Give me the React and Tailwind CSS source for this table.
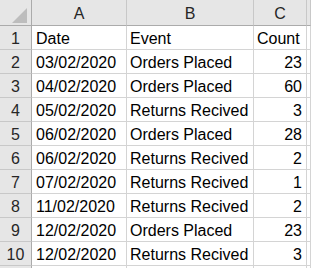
import React from 'react';

const rows = [
  ['Date', 'Event', 'Count'],
  ['03/02/2020', 'Orders Placed', '23'],
  ['04/02/2020', 'Orders Placed', '60'],
  ['05/02/2020', 'Returns Recived', '3'],
  ['06/02/2020', 'Orders Placed', '28'],
  ['06/02/2020', 'Returns Recived', '2'],
  ['07/02/2020', 'Returns Recived', '1'],
  ['11/02/2020', 'Returns Recived', '2'],
  ['12/02/2020', 'Orders Placed', '23'],
  ['12/02/2020', 'Returns Recived', '3'],
];

const cols = ['A', 'B', 'C', ''];

function Corner() {
  return (
    <div className="h-[26px] bg-[#e6e6e6] border-r border-b border-r-[#ababab] border-b-[#ababab] flex items-end justify-end pr-[4px] pb-[2px]">
      <svg width="15" height="15" viewBox="0 0 15 15">
        <polygon points="15,0 15,15 0,15" fill="#bdbdbd" />
      </svg>
    </div>
  );
}

export default function App() {
  return (
    <div
      className="w-[311px] h-[268px] overflow-hidden bg-white text-[16px] leading-[18px] text-black"
      style={{ fontFamily: '"Liberation Sans", Arial, sans-serif' }}
    >
      <div className="grid grid-cols-[32px_95px_127px_53px_1fr]">
        <Corner />
        {cols.map((c, i) => (
          <div
            key={i}
            className="h-[26px] bg-[#e6e6e6] border-r border-b border-r-[#c8c8c8] border-b-[#ababab] flex items-end justify-center pb-[2px] text-[#262626]"
          >
            {c}
          </div>
        ))}
        {rows.map((r, ri) => (
          <React.Fragment key={ri}>
            <div className="h-[24px] bg-[#e6e6e6] border-r border-b border-r-[#ababab] border-b-[#c8c8c8] flex items-end justify-center pb-[1px] text-[#262626]">
              {ri + 1}
            </div>
            <div className="h-[24px] border-r border-b border-[#d4d4d4] flex items-end pl-[4px] pb-[1px] whitespace-nowrap">
              {r[0]}
            </div>
            <div className="h-[24px] border-r border-b border-[#d4d4d4] flex items-end pl-[3px] pb-[1px] whitespace-nowrap">
              {r[1]}
            </div>
            <div
              className={
                'h-[24px] border-r border-b border-[#d4d4d4] flex items-end pb-[1px] whitespace-nowrap ' +
                (ri === 0 ? 'pl-[3px]' : 'justify-end pr-[4px]')
              }
            >
              {r[2]}
            </div>
            <div className="h-[24px] border-r border-b border-[#d4d4d4]" />
          </React.Fragment>
        ))}
        {/* partial next row */}
        <div className="h-[24px] bg-[#e6e6e6] border-r border-r-[#ababab]" />
        <div className="h-[24px] border-r border-[#d4d4d4]" />
        <div className="h-[24px] border-r border-[#d4d4d4]" />
        <div className="h-[24px] border-r border-[#d4d4d4]" />
        <div className="h-[24px] border-r border-[#d4d4d4]" />
      </div>
    </div>
  );
}
